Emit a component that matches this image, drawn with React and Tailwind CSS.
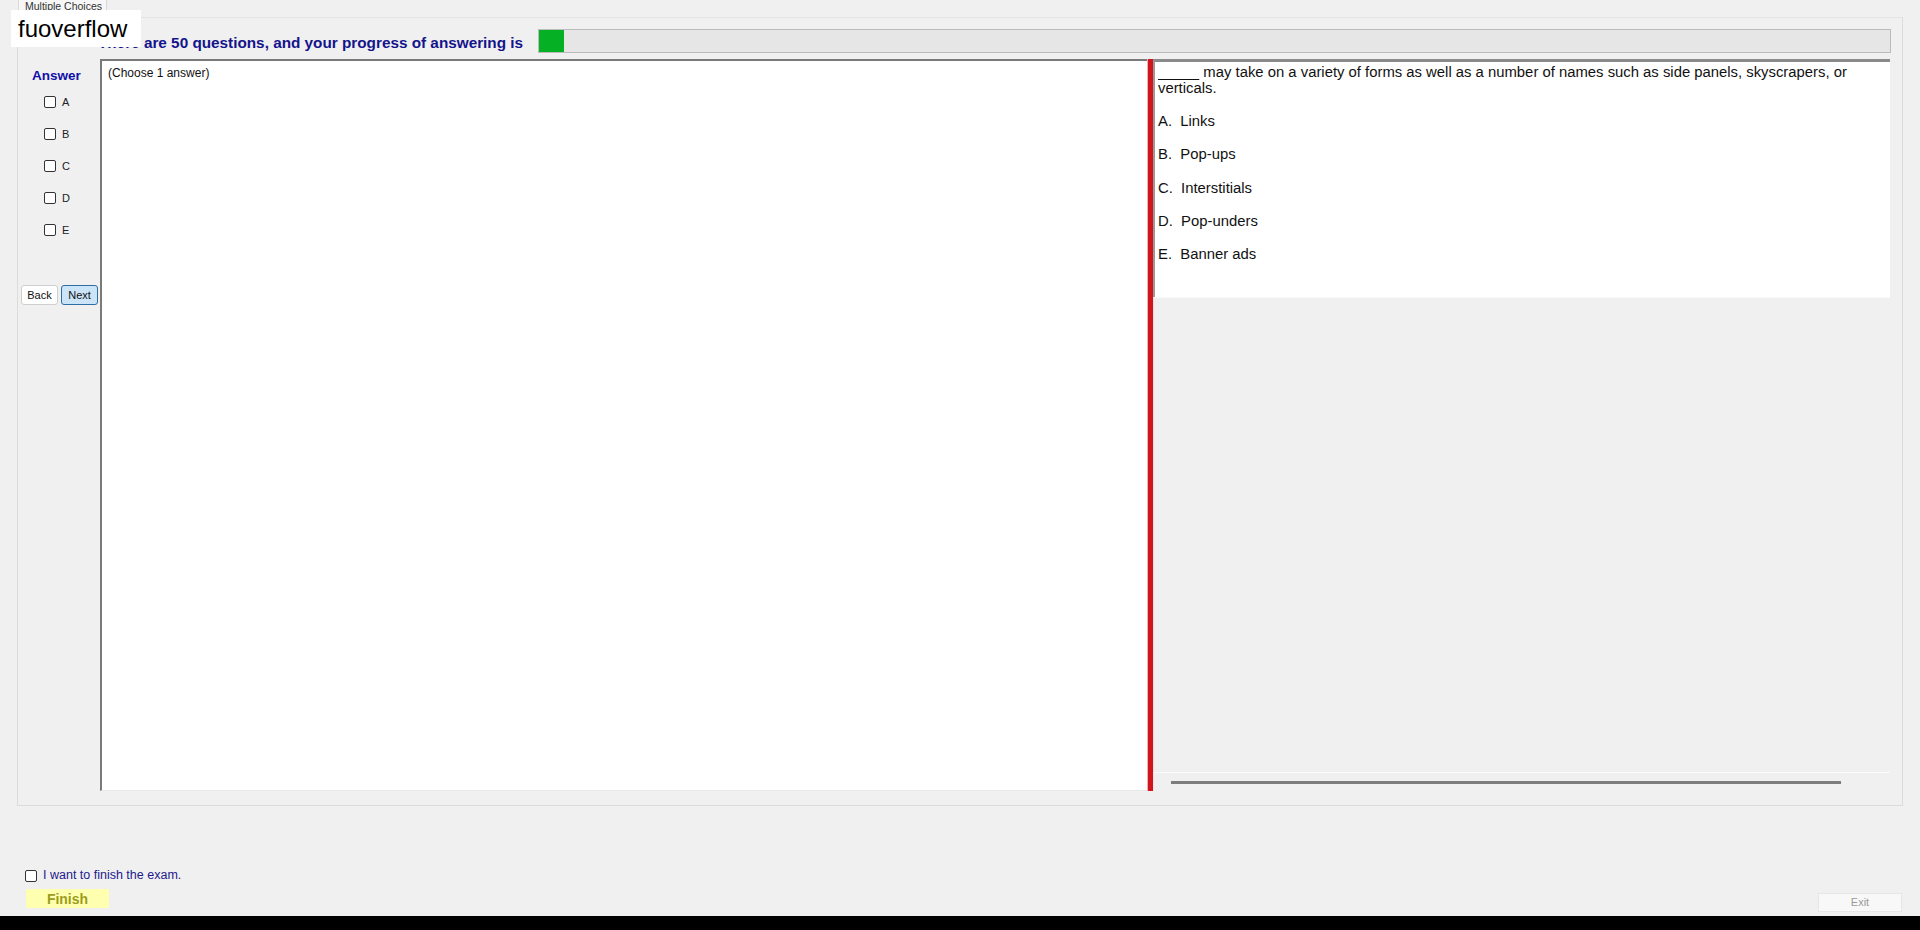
import React from "react";

function Box() {
  return <span className="inline-block w-[12px] h-[12px] rounded-[2px] border border-[#333] bg-white" />;
}

export default function App() {
  const opts = ["A", "B", "C", "D", "E"];
  const answers = ["A.  Links", "B.  Pop-ups", "C.  Interstitials", "D.  Pop-unders", "E.  Banner ads"];
  return (
    <div className="relative w-[1920px] h-[930px] bg-[#f0f0f0] flex flex-col overflow-hidden font-['Liberation_Sans',Arial,sans-serif] text-[#111]">
      {/* tab strip */}
      <div className="h-[17px] pl-[18px] flex items-start shrink-0">
        <div className="h-[17px] w-[89px] bg-[#f7f7f7] border border-b-0 border-t-0 border-[#d9d9d9] text-[10.5px] leading-[12px] text-[#333] pl-[6px] whitespace-nowrap">
          Multiple Choices
        </div>
      </div>

      {/* tab panel */}
      <div className="ml-[17px] w-[1886px] h-[789px] border border-[#dcdcdc] border-t-[#e3e3e3] bg-[#f0f0f0] flex flex-col shrink-0">
        {/* header */}
        <div className="mt-[11px] h-[24px] flex items-center pl-[80px] pr-[11px]">
          <span className="pt-[4px] text-[15.3px] font-bold text-[#14148c] whitespace-nowrap leading-none">
            There are 50 questions, and your progress of answering is
          </span>
          <div className="ml-[15px] flex-1 h-[24px] bg-[#e6e6e6] border border-[#bcbcbc] flex">
            <div className="w-[25px] h-full bg-[#06b025]" />
          </div>
        </div>

        {/* main row */}
        <div className="mt-[6px] h-[732px] flex">
          {/* left column */}
          <div className="w-[82px] flex flex-col">
            <div className="mt-[9px] pl-[14px] text-[13.5px] font-bold text-[#1010a8] leading-[16px]">Answer</div>
            <div className="mt-[12px] flex flex-col gap-[20px] pl-[26px]">
              {opts.map((o) => (
                <div key={o} className="flex items-center gap-[6px] h-[12px]">
                  <Box />
                  <span className="text-[11px] text-[#222] leading-none">{o}</span>
                </div>
              ))}
            </div>
            <div className="mt-[49px] pl-[3px] flex gap-[3px]">
              <button className="w-[37px] h-[20px] bg-white border border-[#cfcfcf] rounded-[3px] text-[11px] text-[#111] leading-none">
                Back
              </button>
              <button className="w-[37px] h-[20px] bg-[#cce4f7] border border-[#2f6da3] rounded-[3px] text-[11px] text-[#111] leading-none">
                Next
              </button>
            </div>
          </div>

          {/* middle panel */}
          <div className="w-[1047px] h-[732px] bg-white border-l-2 border-t-2 border-[#7a7a7a] border-b border-b-[#e8e8e8]">
            <div className="pl-[6px] pt-[5px] text-[12px] leading-[14px] text-[#111]">(Choose 1 answer)</div>
          </div>

          {/* red splitter */}
          <div className="w-[6px] h-[732px] bg-[#d2141c] border-l border-[#f3b0b0]" />

          {/* right column */}
          <div className="w-[737px] flex flex-col">
            <div className="h-[238px] bg-white border-t-[3px] border-[#8a8a8a] border-l-2 border-l-[#9a9a9a] pl-[3px] pt-[2px] text-[14.85px] leading-[16px] text-[#111]">
              <p className="pr-[20px]">
                <span className="underline decoration-[1px] underline-offset-[2px]">{"\u00a0\u00a0\u00a0\u00a0\u00a0\u00a0\u00a0\u00a0\u00a0\u00a0"}</span> may take on a variety of forms as well as a number of names such as side panels, skyscrapers, or verticals.
              </p>
              <div className="mt-[17px] flex flex-col gap-[17.3px]">
                {answers.map((a) => (
                  <div key={a} className="whitespace-pre leading-[16px]">{a}</div>
                ))}
              </div>
            </div>
            <div className="h-[476px] bg-[#f0f0f0] border-t border-[#fafafa] border-l border-l-[#e0e0e0] border-b border-b-[#fbfbfb]" />
            <div className="flex-1 flex items-center pl-[17px] pr-[49px] border-l border-[#e8e8e8]">
              <div className="w-full h-[3px] bg-[#7d7d7d]" />
            </div>
          </div>
        </div>
      </div>

      {/* bottom area */}
      <div className="flex-1 relative flex">
        <div className="pl-[25px] pt-[63px] flex flex-col">
          <div className="flex items-center gap-[6px] h-[13px]">
            <Box />
            <span className="text-[12.5px] text-[#241a8c] leading-none">I want to finish the exam.</span>
          </div>
          <button className="mt-[7px] ml-[1px] w-[83px] h-[19px] bg-[#ffffb0] text-[#9c9c1c] text-[14px] font-bold leading-none rounded-[2px]">
            Finish
          </button>
        </div>
        <div className="ml-auto mr-[18px] pt-[83px]">
          <button className="w-[84px] h-[19px] bg-[#f8f8f8] border border-[#e6e6e6] text-[11px] text-[#9a9a9a] leading-none">
            Exit
          </button>
        </div>
      </div>

      {/* black bar */}
      <div className="h-[14px] bg-black shrink-0" />

      {/* overlay watermark */}
      <div className="absolute left-[11px] top-[10px] w-[130px] h-[37px] bg-white flex items-center pl-[7px] text-[24px] text-black leading-none">
        fuoverflow
      </div>
    </div>
  );
}
